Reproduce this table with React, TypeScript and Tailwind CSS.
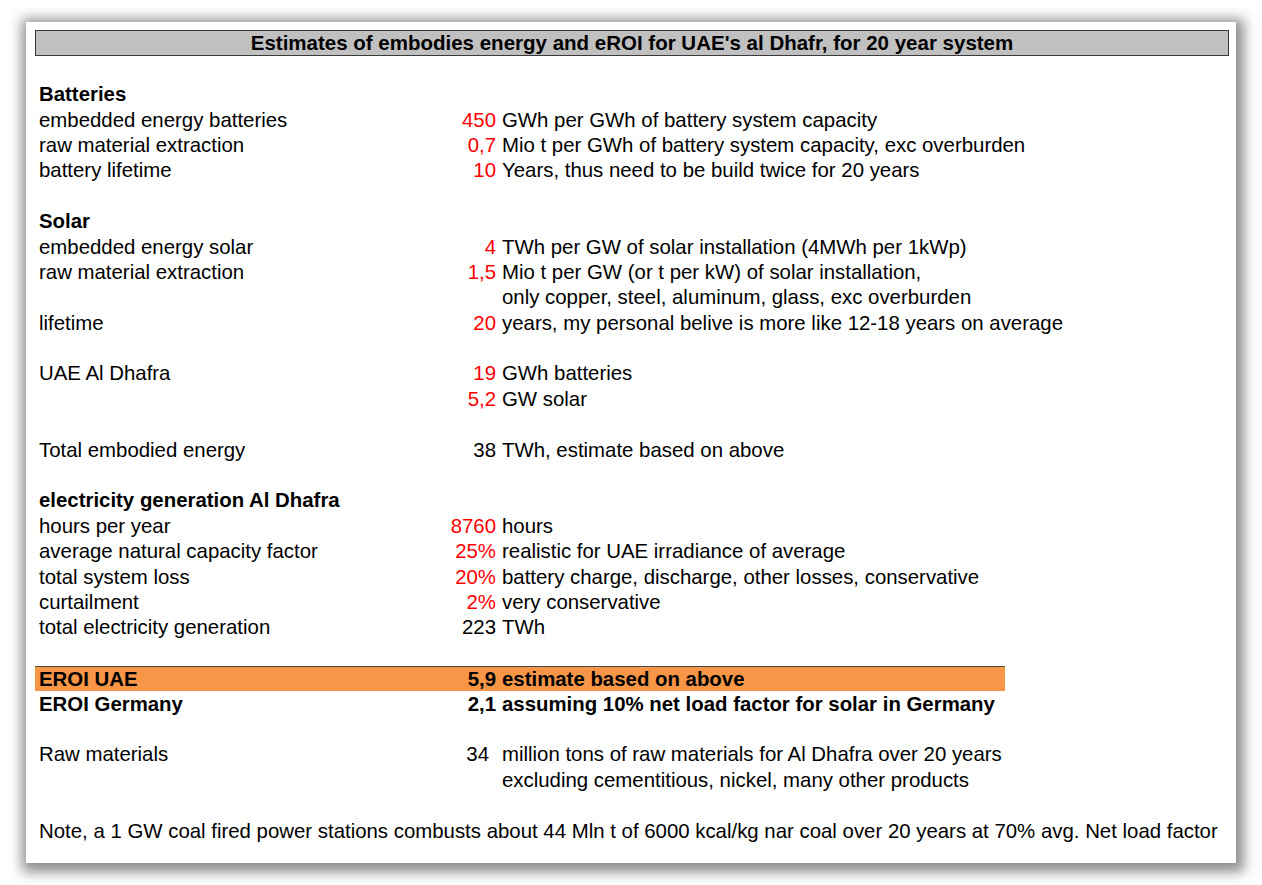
type Row = {
  label?: string;
  value?: string;
  text?: string;
  red?: boolean;
  bold?: boolean;
  heading?: boolean;
  highlight?: boolean;
  valuePad?: boolean;
};

const rows: Row[] = [
  { label: 'Batteries', heading: true },
  { label: 'embedded energy batteries', value: '450', red: true, text: 'GWh per GWh of battery system capacity' },
  { label: 'raw material extraction', value: '0,7', red: true, text: 'Mio t per GWh of battery system capacity, exc overburden' },
  { label: 'battery lifetime', value: '10', red: true, text: 'Years, thus need to be build twice for 20 years' },
  {},
  { label: 'Solar', heading: true },
  { label: 'embedded energy solar', value: '4', red: true, text: 'TWh per GW of solar installation (4MWh per 1kWp)' },
  { label: 'raw material extraction', value: '1,5', red: true, text: 'Mio t per GW (or t per kW) of solar installation,' },
  { text: 'only copper, steel, aluminum, glass, exc overburden' },
  { label: 'lifetime', value: '20', red: true, text: 'years, my personal belive is more like 12-18 years on average' },
  {},
  { label: 'UAE Al Dhafra', value: '19', red: true, text: 'GWh batteries' },
  { value: '5,2', red: true, text: 'GW solar' },
  {},
  { label: 'Total embodied energy', value: '38', text: 'TWh, estimate based on above' },
  {},
  { label: 'electricity generation Al Dhafra', heading: true },
  { label: 'hours per year', value: '8760', red: true, text: 'hours' },
  { label: 'average natural capacity factor', value: '25%', red: true, text: 'realistic for UAE irradiance of average' },
  { label: 'total system loss', value: '20%', red: true, text: 'battery charge, discharge, other losses, conservative' },
  { label: 'curtailment', value: '2%', red: true, text: 'very conservative' },
  { label: 'total electricity generation', value: '223', text: 'TWh' },
  {},
  { label: 'EROI UAE', value: '5,9', text: 'estimate based on above', bold: true, highlight: true },
  { label: 'EROI Germany', value: '2,1', text: 'assuming 10% net load factor for solar in Germany', bold: true },
  {},
  { label: 'Raw materials', value: '34', text: 'million tons of raw materials for Al Dhafra over 20 years', valuePad: true },
  { text: 'excluding cementitious, nickel, many other products' },
  {},
];

function SheetRow({ row }: { row: Row }) {
  const weight = row.bold || row.heading ? 'font-bold' : 'font-normal';
  return (
    <div
      className={`flex h-[25.4px] items-center whitespace-nowrap pl-1 ${
        row.highlight ? 'w-[970px] bg-[#f79646] border-t border-[#4a4a4a]' : ''
      } ${weight}`}
    >
      <div className="w-[381px]">{row.label}</div>
      <div
        className={`w-[76px] text-right ${row.red ? 'text-[#ff0000]' : ''} ${row.valuePad ? 'pr-[7px]' : ''}`}
      >
        {row.value}
      </div>
      <div className="pl-[6px]">{row.text}</div>
    </div>
  );
}

export default function App() {
  return (
    <div className="w-[1262px] h-[885px] bg-white pl-[26px] pt-[22px] font-['Liberation_Sans',Arial,sans-serif] text-black">
      <div className="w-[1210px] h-[841px] bg-white shadow-[2px_3px_12px_6px_rgba(0,0,0,0.45)] pl-[9px] pr-[7px] pt-[8px]">
        <div className="h-[26px] flex items-center justify-center bg-[#c0c0c0] border border-[#3a3a3a] text-[20.5px] leading-[24px] font-bold">
          Estimates of embodies energy and eROI for UAE's al Dhafr, for 20 year system
        </div>
        <div className="pt-[26px] text-[20.4px] leading-[23px]">
          {rows.map((row, i) => (
            <SheetRow key={i} row={row} />
          ))}
          <div className="flex h-[25.4px] items-center whitespace-nowrap pl-1">
            Note, a 1 GW coal fired power stations combusts about 44 Mln t of 6000 kcal/kg nar coal over 20 years at 70% avg. Net load factor
          </div>
        </div>
      </div>
    </div>
  );
}
